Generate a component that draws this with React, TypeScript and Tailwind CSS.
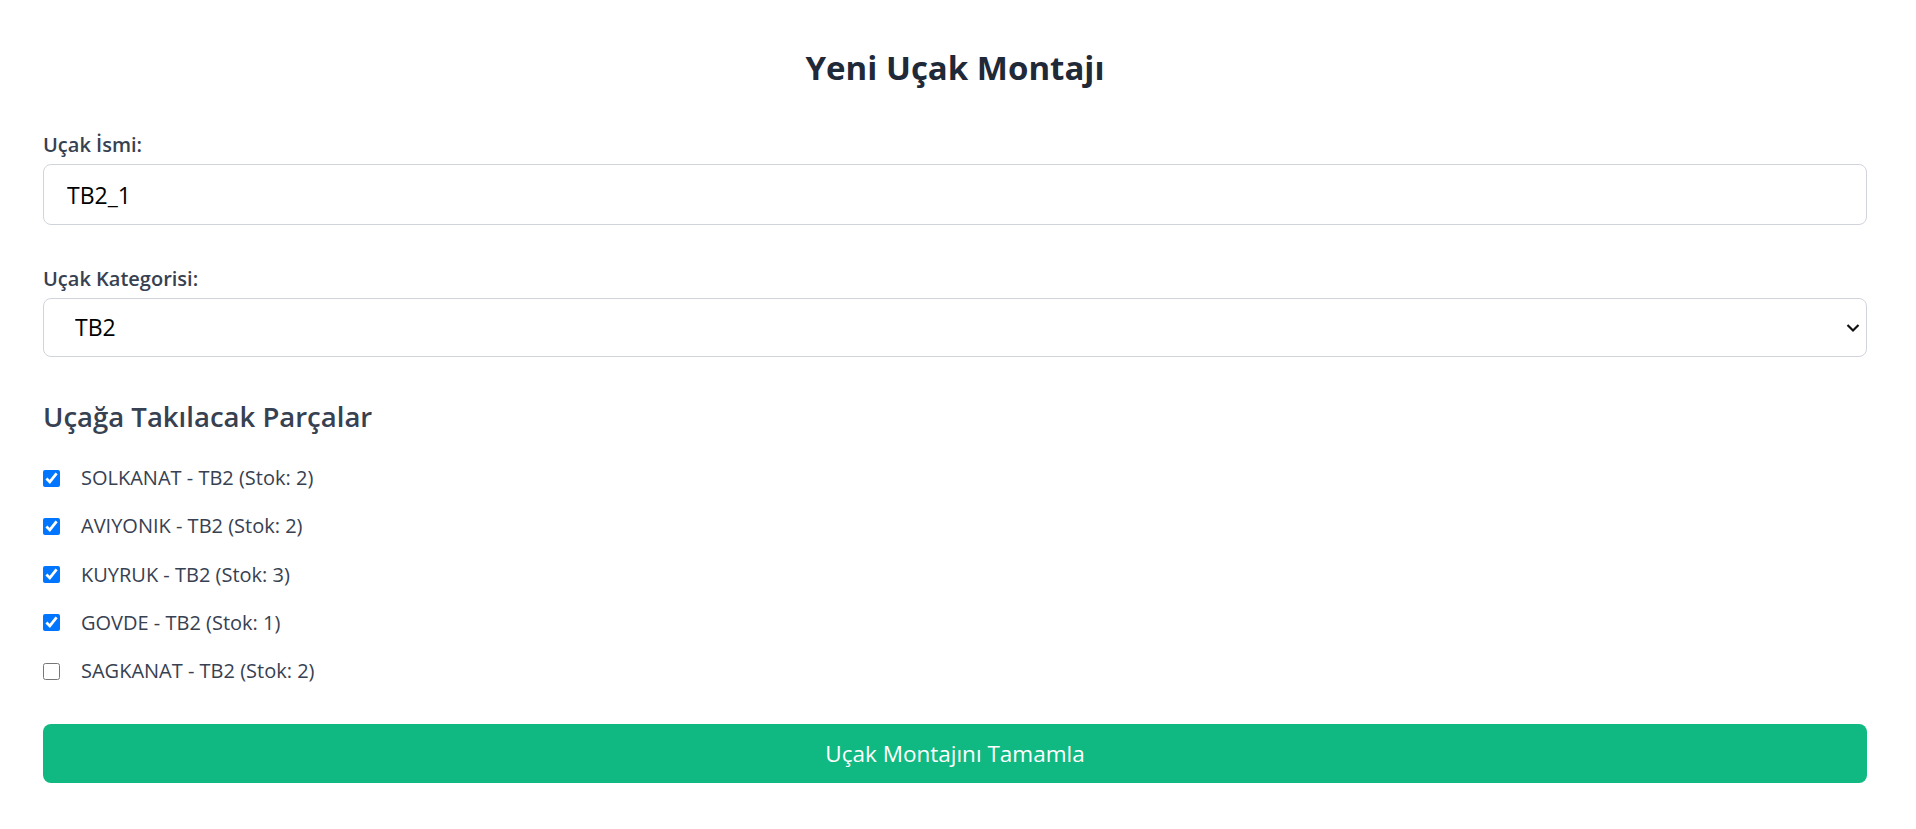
import React from "react";

const parts = [
  { name: "SOLKANAT - TB2 (Stok: 2)", checked: true },
  { name: "AVIYONIK - TB2 (Stok: 2)", checked: true },
  { name: "KUYRUK - TB2 (Stok: 3)", checked: true },
  { name: "GOVDE - TB2 (Stok: 1)", checked: true },
  { name: "SAGKANAT - TB2 (Stok: 2)", checked: false },
];

export default function App() {
  return (
    <div
      className="min-h-screen bg-white"
      style={{ fontFamily: '"Open Sans", "Noto Sans", sans-serif' }}
    >
      <div className="pl-[43px] pr-[49px] pt-[46px]">
        <h1 className="text-center text-[33px] leading-[44px] font-bold text-[#1f2937]">
          Yeni Uçak Montajı
        </h1>

        <div className="mt-[43px]">
          <label className="block text-[20px] leading-[24px] font-semibold text-[#374151]">
            Uçak İsmi:
          </label>
          <input
            type="text"
            defaultValue="TB2_1"
            className="mt-[7px] block h-[61px] w-full rounded-[8px] border border-[#d1d5db] bg-white pl-[23px] text-[23px] text-black outline-none"
          />
        </div>

        <div className="mt-[42px]">
          <label className="block text-[20px] leading-[24px] font-semibold text-[#374151]">
            Uçak Kategorisi:
          </label>
          <div className="relative mt-[7px]">
            <select
              defaultValue="TB2"
              className="block h-[59px] w-full appearance-none rounded-[8px] border border-[#d1d5db] bg-white pl-[31px] text-[23px] text-black outline-none"
            >
              <option value="TB2">TB2</option>
            </select>
            <svg
              className="pointer-events-none absolute right-[7px] top-[25px]"
              width="14"
              height="10"
              viewBox="0 0 14 10"
            >
              <polyline
                points="1.5,2 7,7.5 12.5,2"
                fill="none"
                stroke="#111"
                strokeWidth="2.2"
              />
            </svg>
          </div>
        </div>

        <h2 className="mt-[43px] text-[27.5px] leading-[34px] font-semibold text-[#374151]">
          Uçağa Takılacak Parçalar
        </h2>

        <div className="mt-[31px] flex flex-col gap-[22.25px]">
          {parts.map((p) => (
            <label key={p.name} className="flex h-[26px] items-center">
              <input
                type="checkbox"
                defaultChecked={p.checked}
                className="m-0 h-[17px] w-[17px] accent-[#0075ff]"
              />
              <span className="ml-[21px] text-[20px] leading-[26px] text-[#374151]">
                {p.name}
              </span>
            </label>
          ))}
        </div>

        <button className="mt-[40px] flex h-[59px] w-full items-center justify-center rounded-[8px] bg-[#10b981] text-[22.5px] text-white">
          Uçak Montajını Tamamla
        </button>
      </div>
    </div>
  );
}
